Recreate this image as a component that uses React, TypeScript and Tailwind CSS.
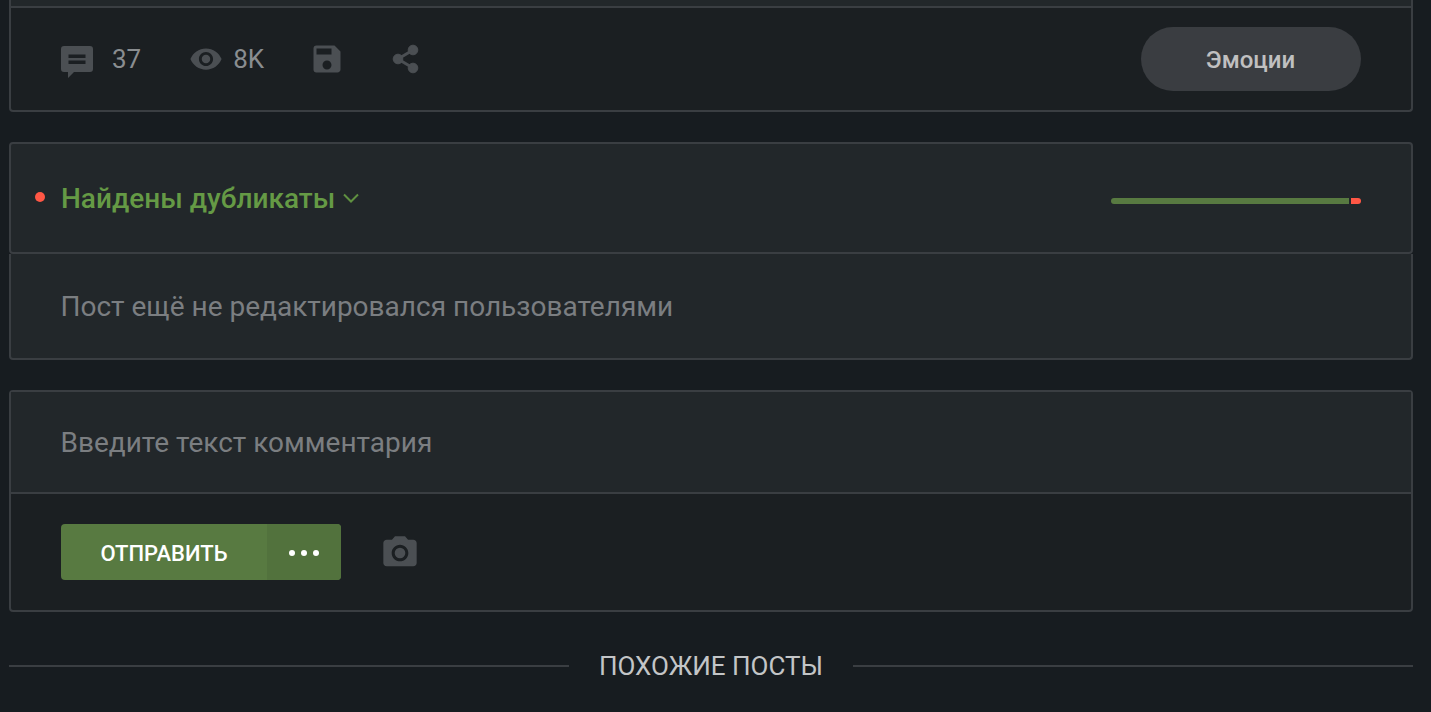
import React from 'react';
import { MdCameraAlt, MdSave, MdVisibility } from 'react-icons/md';

const CommentIcon = () => (
  <svg width="32" height="32" viewBox="0 0 32 32" className="fill-[#4b4f53] mt-[5px]">
    <path d="M3 0h26a3 3 0 0 1 3 3v20a3 3 0 0 1-3 3H13l-6 6v-6H3a3 3 0 0 1-3-3V3a3 3 0 0 1 3-3zm4.500 8.500V12h17V8.500zm0 6V18h17v-3.500z" fillRule="evenodd" />
  </svg>
);

const ShareIcon = () => (
  <svg width="28" height="30" viewBox="0 0 28 30" className="fill-[#4b4f53] stroke-[#4b4f53] ml-[47px]">
    <circle cx="21" cy="6" r="4.800" />
    <circle cx="6" cy="15" r="4.800" />
    <circle cx="21" cy="24" r="4.800" />
    <path d="M21 6L6 15l15 9" fill="none" strokeWidth="3" />
  </svg>
);

const Chevron = () => (
  <svg width="16" height="10" viewBox="0 0 16 10" fill="none" stroke="#5f9040" strokeWidth="2">
    <path d="M1 1.500l7 7 7-7" />
  </svg>
);

export default function App() {
  return (
    <div className="w-[1431px] h-[712px] overflow-hidden bg-[#171c20] pl-[9px] pr-[18px] font-['Roboto',sans-serif]">
      {/* Post footer */}
      <div className="border-x-2 border-b-2 border-[#3a3e42] rounded-b-[4px] bg-[#1b1f22]">
        <div className="h-[6px] bg-[#22272a]" />
        <div className="h-[2px] bg-[#3a3e42]" />
        <div className="h-[102px] pl-[50px] pr-[50px] flex items-center">
          <div className="flex items-center text-[26px] leading-none">
            <CommentIcon />
            <span className="ml-[19px] mr-[47px] text-[#8a8d90]">37</span>
            <MdVisibility size={34} className="text-[#4b4f53] ml-[1px]" />
            <span className="ml-[10px] mr-[45px] text-[#8a8d90]">8K</span>
            <MdSave size={36} className="text-[#4b4f53]" />
            <ShareIcon />
          </div>
          <button className="ml-auto w-[220px] h-[64px] pt-[1px] pr-[1px] rounded-full bg-[#3a3d41] text-[#c0c0c0] text-[24px] font-medium">
            Эмоции
          </button>
        </div>
      </div>

      {/* Duplicates */}
      <div className="mt-[30px] h-[112px] border-2 border-[#3a3e42] rounded-[4px] bg-[#22272a] pr-[50px] flex items-center">
        <span className="ml-[24px] -mt-[2px] w-[10px] h-[10px] rounded-full bg-[#ff5745]" />
        <span className="ml-[16px] mt-[2px] text-[#659a45] text-[28px] font-medium leading-none">Найдены дубликаты</span>
        <span className="ml-[8px]">
          <Chevron />
        </span>
        <div className="ml-auto mt-[5px] w-[250px] h-[6px] flex gap-[2px]">
          <div className="flex-1 rounded-l-[3px] bg-[#587a41]" />
          <div className="w-[10px] rounded-r-[3px] bg-[#ff5745]" />
        </div>
      </div>
      <div className="h-[106px] border-x-2 border-b-2 border-[#3a3e42] rounded-b-[4px] bg-[#22272a] pl-[49.5px] flex items-center">
        <span className="mt-[2px] text-[#7b7e81] text-[28px] leading-none">Пост ещё не редактировался пользователями</span>
      </div>

      {/* Comment form */}
      <div className="mt-[30px] h-[222px] border-2 border-[#3a3e42] rounded-[4px] bg-[#1b1f22]">
        <div className="h-[102px] bg-[#22272a] border-b-2 border-[#3a3e42] pl-[49.5px] flex items-center">
          <span className="mt-[1px] text-[#7b7e81] text-[28px] leading-none">Введите текст комментария</span>
        </div>
        <div className="h-[116px] pl-[50px] flex items-center">
          <div className="w-[280px] h-[56px] rounded-[4px] overflow-hidden bg-[#587a41] flex">
            <span className="w-[206px] pt-[2px] flex items-center justify-center text-white text-[22px] font-medium">
              ОТПРАВИТЬ
            </span>
            <span className="flex-1 bg-[#52723d] pt-[1px] flex items-center justify-center gap-[6px]">
              <i className="w-[6px] h-[6px] rounded-full bg-white" />
              <i className="w-[6px] h-[6px] rounded-full bg-white" />
              <i className="w-[6px] h-[6px] rounded-full bg-white" />
            </span>
          </div>
          <MdCameraAlt size={40} className="ml-[38.5px] mt-[1px] text-[#4b4f53]" />
        </div>
      </div>

      {/* Similar posts */}
      <div className="mt-[39px] flex items-center text-[#c3c5c7] text-[26px] leading-[30px]">
        <div className="flex-1 h-[2px] bg-[#3a3e42]" />
        <span className="ml-[30px] mr-[30px]">ПОХОЖИЕ ПОСТЫ</span>
        <div className="flex-1 h-[2px] bg-[#3a3e42]" />
      </div>
    </div>
  );
}
